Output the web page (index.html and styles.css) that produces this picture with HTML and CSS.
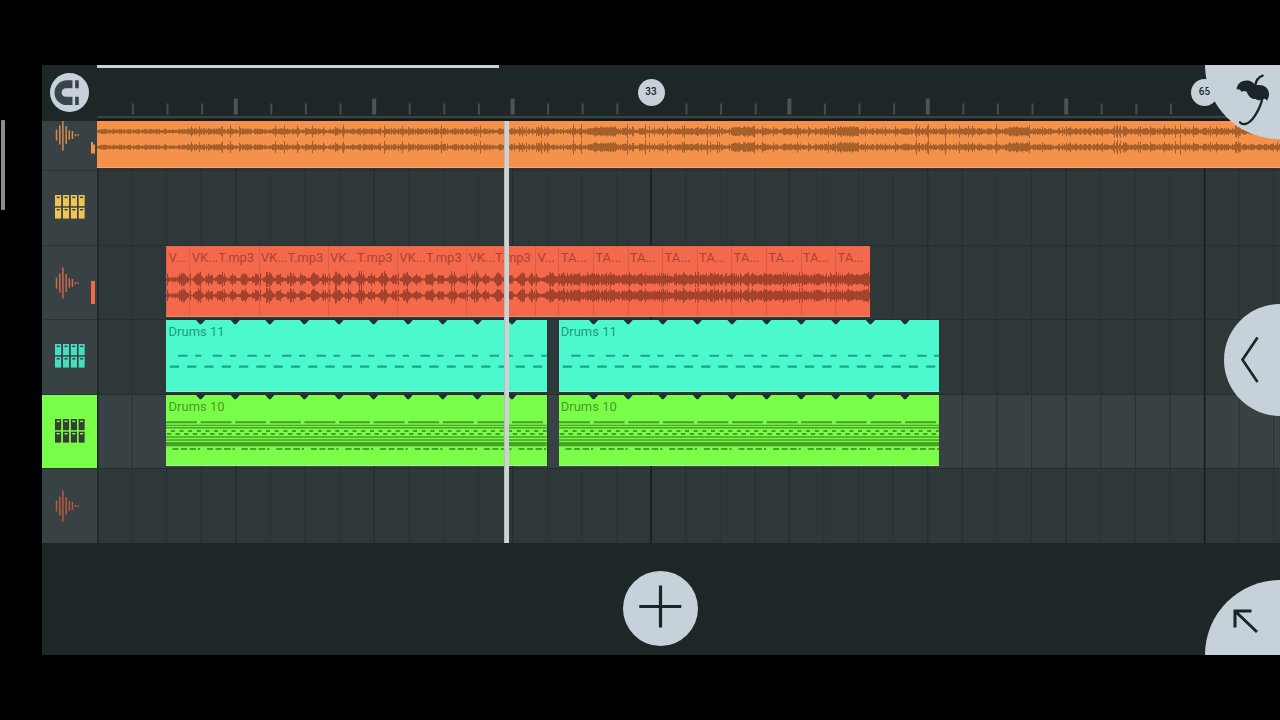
FILE: index.html
```html
<!DOCTYPE html>
<html>

<head>
    <meta charset="utf-8">
    <title>Playlist</title>
    <link rel="stylesheet" href="styles.css">
</head>

<body>
    <svg class="defs">
        <symbol id="icon-wave" viewBox="0 0 24 34">
            <path d="M1.5 11.5v11M4.8 7.5v19M7.9 1.5v31M11.2 8v18M14.3 12.3v9.4M17.4 13v8M20.5 16v2.2M23.2 16.2v1.6" stroke="currentColor" stroke-width="1.5" fill="none"/>
        </symbol>
        <symbol id="pad" viewBox="0 0 6.4 11.4">
            <rect width="6.4" height="11.4" fill="currentColor"/>
            <rect class="pad-hole" x="1.7" y="1.6" width="3" height="1.5"/>
        </symbol>
        <symbol id="icon-pads" viewBox="0 0 30 24">
            <use href="#pad" x="0" y="0" width="6.4" height="11.4"/>
            <use href="#pad" x="7.8" y="0" width="6.4" height="11.4"/>
            <use href="#pad" x="15.6" y="0" width="6.4" height="11.4"/>
            <use href="#pad" x="23.4" y="0" width="6.4" height="11.4"/>
            <use href="#pad" x="0" y="12.4" width="6.4" height="11.4"/>
            <use href="#pad" x="7.8" y="12.4" width="6.4" height="11.4"/>
            <use href="#pad" x="15.6" y="12.4" width="6.4" height="11.4"/>
            <use href="#pad" x="23.4" y="12.4" width="6.4" height="11.4"/>
        </symbol>
    </svg>
    <div class="edge-handle"></div>

    <div class="app">
        <div class="header">
            <div class="corner">
                <div class="magnet">
                    <svg viewBox="149 53 118 118" width="39" height="39">
                        <path d="M217 75H200A37.5 37.5 0 0 0 200 150H217V125H197A13 13 0 0 1 197 99H217ZM225 75h11v24h-11zM225 125h11v25h-11z" fill="#3b444a"/>
                    </svg>
                </div>
            </div>
            <div class="ruler">
                <div class="scroll"></div>
                <svg class="ticks" id="ticks" width="1183" height="48"></svg>
                <div class="ruler-line"></div>
                <div class="marker m33">33</div>
                <div class="marker m65">65</div>
            </div>
        </div>

        <div class="tracks">
            <div class="track first">
                <div class="head orange"><svg class="wave-icon"><use href="#icon-wave"/></svg><div class="meter half"></div></div>
                <div class="lane"><div class="clip orange"><svg class="notes" id="mainWave" width="1183" height="47"></svg></div></div>
            </div>
            <div class="track">
                <div class="head yellow"><svg class="pads-icon"><use href="#icon-pads"/></svg></div>
                <div class="lane"></div>
            </div>
            <div class="track">
                <div class="head red"><svg class="wave-icon"><use href="#icon-wave"/></svg><div class="meter"></div></div>
                <div class="lane offset">
                    <div class="clip red" data-wave="beat" data-bars="0.6667">V...</div>
                    <div class="clip red" data-wave="beat" data-bars="2">VK...T.mp3</div>
                    <div class="clip red" data-wave="beat" data-bars="2">VK...T.mp3</div>
                    <div class="clip red" data-wave="beat" data-bars="2">VK...T.mp3</div>
                    <div class="clip red" data-wave="beat" data-bars="2">VK...T.mp3</div>
                    <div class="clip red" data-wave="beat" data-bars="2">VK...T.mp3</div>
                    <div class="clip red" data-wave="beat" data-bars="0.6667">V...</div>
                    <div class="clip red" data-wave="dense" data-bars="1">TA...</div>
                    <div class="clip red" data-wave="dense" data-bars="1">TA...</div>
                    <div class="clip red" data-wave="dense" data-bars="1">TA...</div>
                    <div class="clip red" data-wave="dense" data-bars="1">TA...</div>
                    <div class="clip red" data-wave="dense" data-bars="1">TA...</div>
                    <div class="clip red" data-wave="dense" data-bars="1">TA...</div>
                    <div class="clip red" data-wave="dense" data-bars="1">TA...</div>
                    <div class="clip red" data-wave="dense" data-bars="1">TA...</div>
                    <div class="clip red" data-wave="dense" data-bars="1">TA...</div>
                </div>
            </div>
            <div class="track">
                <div class="head teal"><svg class="pads-icon"><use href="#icon-pads"/></svg></div>
                <div class="lane offset gapped">
                    <div class="clip teal" data-notes="drums11">Drums 11</div>
                    <div class="clip teal" data-notes="drums11">Drums 11</div>
                </div>
            </div>
            <div class="track selected">
                <div class="head green"><svg class="pads-icon"><use href="#icon-pads"/></svg></div>
                <div class="lane offset gapped">
                    <div class="clip green" data-notes="drums10">Drums 10</div>
                    <div class="clip green" data-notes="drums10">Drums 10</div>
                </div>
            </div>
            <div class="track">
                <div class="head rust"><svg class="wave-icon"><use href="#icon-wave"/></svg></div>
                <div class="lane"></div>
            </div>
            <div class="playhead"></div>
        </div>

        <div class="footer">
            <div class="round add">
                <svg width="75" height="75"><path d="M16.3 35.5h42M37.5 14.5v42" stroke="#1b2527" stroke-width="3.2"/></svg>
            </div>
        </div>

        <div class="round menu">
            <svg viewBox="315 15 225 225" width="75" height="75">
                <path d="M410 89C410 68 432 58 450 63C458 66 463 71 467 76C485 71 507 80 507 102C507 109 505 116 501 122C497 116 492 115 487 118C481 122 472 121 466 116C456 119 446 111 441 97C436 92 430 92 425 96C421 88 415 86 410 89Z" fill="#1b2527"/>
                <path d="M465 80C467 63 476 51 488 47M488 112C480 150 455 189 435 192C427 193 423 191 420 187" fill="none" stroke="#1b2527" stroke-width="7" stroke-linecap="round"/>
            </svg>
        </div>
        <div class="round panel">
            <svg width="56" height="112"><path d="M33.5 33.5L18.5 55.7L33.5 78" fill="none" stroke="#1b2527" stroke-width="2.6"/></svg>
        </div>
        <div class="round expand">
            <svg width="75" height="75"><path d="M46.5 31H30V47.5M30.5 31.5L52 52" fill="none" stroke="#1b2527" stroke-width="3"/></svg>
        </div>
    </div>

    <script src="playlist.js"></script>
</body>

</html>
```
FILE: styles.css
```css
body {
    margin: 0;
    padding: 65px 0 0 42px;
    background: #000;
    font: 400 13px/16px Roboto, sans-serif;
    overflow: hidden;
}

svg {
    display: block;
}

.defs {
    position: absolute;
    width: 0;
    height: 0;
}

.edge-handle {
    position: absolute;
    left: 1px;
    top: 120px;
    width: 4px;
    height: 90px;
    border-radius: 1px;
    background: #8e8e86;
}

.app {
    position: relative;
    width: 1238px;
    height: 590px;
    background: #1e2728;
    overflow: hidden;
    display: flex;
    flex-direction: column;
}

.header {
    display: flex;
    height: 56px;
}

.corner {
    width: 55px;
    box-sizing: border-box;
    padding: 8px 0 0 8px;
}

.magnet {
    width: 39px;
    height: 39px;
    border-radius: 50%;
    background: #c6d1d9;
}

.ruler {
    position: relative;
    flex: 1;
    box-sizing: border-box;
    border-bottom: 2px solid #161c1d;
}

.scroll {
    width: 402px;
    height: 2.5px;
    background: #c6d1d9;
}

.ruler-line {
    height: 2px;
    margin-top: .5px;
    background: #3b4445;
}

.marker {
    position: absolute;
    top: 14px;
    width: 27px;
    height: 27px;
    border-radius: 50%;
    background: #c6d1d9;
    color: #1b2527;
    font: 500 10px/26px Roboto, sans-serif;
    text-align: center;
}

.m33 {
    left: 540.5px;
}

.m65 {
    left: 1094px;
}

.tracks {
    position: relative;
}

.track {
    display: flex;
    height: 74.5px;
}

.track.first {
    height: 49.3px;
}

.head {
    position: relative;
    display: flex;
    align-items: center;
    width: 55px;
    box-sizing: border-box;
    padding-left: 13px;
    background: #384143;
    border-top: 1px solid #2a3233;
    --hole: #384143;
}

.head.orange { color: #d68b4e; }
.head.yellow { color: #efc453; }
.head.red { color: #cf6650; }
.head.teal { color: #45dfc0; }
.head.rust { color: #b9593f; }

.head.green {
    color: #34402f;
    background: #79fd49;
    --hole: #8cf069;
}

.track.first .head {
    align-items: flex-start;
    border-top: 0;
    overflow: hidden;
}

.pad-hole {
    fill: var(--hole);
}

.wave-icon {
    width: 24px;
    height: 34px;
}

.track.first .wave-icon {
    margin-top: -3px;
}

.pads-icon {
    width: 30px;
    height: 24px;
    margin-bottom: 2px;
}

.meter {
    position: absolute;
    right: 2px;
    top: 35px;
    width: 4px;
    height: 23px;
    background: #f0694b;
}

.meter.half {
    top: 20.5px;
    height: 12px;
    background: #f29049;
    clip-path: polygon(0 0, 50% 0, 50% 25%, 100% 25%, 100% 100%, 0 100%);
}

/* one bar is 34.6px, the strong lines come every 4 and every 16 bars */
.lane {
    flex: 1;
    display: flex;
    box-sizing: border-box;
    border-top: 1px solid #252e2f;
    background-color: #2f3838;
    background-image:
        linear-gradient(90deg, #1a2223 2px, transparent 2px),
        linear-gradient(90deg, #222b2b 1.4px, transparent 1.4px),
        linear-gradient(90deg, #283131 1px, transparent 1px);
    background-size: 553.6px 100%, 138.4px 100%, 34.6px 100%;
    background-position: -.5px 0, 0 0, 0 0;
}

.selected .lane {
    background-color: #384143;
}

.offset {
    padding-left: 69.4px;
}

.gapped {
    gap: 11.6px;
}

.clip {
    position: relative;
    height: 71px;
    flex: none;
    box-sizing: border-box;
    padding: 4px 0 0 2.2px;
    border-bottom: 1px solid;
    white-space: nowrap;
}

.notes {
    position: absolute;
    left: 0;
    top: 0;
}

.clip.orange {
    width: 1183px;
    height: 47px;
    margin-top: -1px;
    background: #f4914a;
    border-color: #f4a76e;
}

.clip.red {
    background: #f4694b;
    border-color: #e08d7c;
    color: #ab4531;
    box-shadow: inset 1px 0 #dd5e44;
}

.clip.teal {
    height: 72px;
    width: 380.6px;
    background: #4cf9cd;
    border-color: #9be8d4;
    color: #209c82;
}

.clip.green {
    width: 380.6px;
    background: #79fd49;
    border-color: #b0f594;
    color: #469e26;
}

.playhead {
    position: absolute;
    left: 462px;
    top: 0;
    width: 5px;
    height: 422px;
    background: #cdd3d5;
    border-left: 1px solid #b4bcbe;
    box-sizing: border-box;
}

.footer {
    flex: 1;
    display: flex;
    justify-content: center;
    align-items: flex-start;
    padding: 28px 1px 0 0;
}

.round {
    background: #c6d1d9;
}

.add {
    width: 75px;
    height: 75px;
    border-radius: 50%;
}

.menu,
.panel,
.expand {
    position: absolute;
    right: 0;
    width: 75px;
    height: 75px;
}

.menu {
    top: 0;
    height: 74px;
    overflow: hidden;
    border-radius: 0 0 0 75px;
}

.panel {
    top: 239px;
    width: 56px;
    height: 112px;
    border-radius: 56px 0 0 56px;
}

.expand {
    bottom: 0;
    border-radius: 75px 0 0 0;
}
```
FILE: playlist.js
```js
const BAR = 34.6;
const NS = 'http://www.w3.org/2000/svg';

let seed = 7;
function rnd() {
    seed = (seed * 16807) % 2147483647;
    return seed / 2147483647;
}

function addPath(svg, d, color) {
    const p = document.createElementNS(NS, 'path');
    p.setAttribute('d', d);
    p.setAttribute('fill', color);
    svg.appendChild(p);
}

function box(x, y, w, h) {
    return `M${x.toFixed(1)} ${y.toFixed(1)}h${w.toFixed(1)}v${h.toFixed(1)}h${(-w).toFixed(1)}z`;
}

function newSvg(clip, w, h) {
    const svg = document.createElementNS(NS, 'svg');
    svg.setAttribute('class', 'notes');
    svg.setAttribute('width', w);
    svg.setAttribute('height', h);
    clip.appendChild(svg);
    return svg;
}

// ruler
let minor = '', major = '';
for (let i = 1; i < 35; i++) {
    if (i % 16 === 0) continue;
    const x = i * BAR;
    if (i % 4 === 0) major += box(x - 1.6, 30.5, 4, 16);
    else minor += box(x + .3, 35.5, 2, 11);
}
addPath(document.getElementById('ticks'), minor, '#444d4e');
addPath(document.getElementById('ticks'), major, '#4c5556');

// long audio clip, two channels
const solid = [[496, 519], [634, 656], [740, 762], [912, 932]];
let wave = '';
for (let x = 0; x < 1183; x++) {
    let a = 1.2 + rnd() * (x < 90 ? 1.6 : 2.2);
    if (rnd() > .88 && x > 80) a += 1 + rnd() * 2.8;
    if (x > 470) a += .3;
    if (solid.some(s => x >= s[0] && x < s[1])) a = 3.4 + rnd() * 1.8;
    wave += box(x, 10.5 - a, 1, a * 2);
    const b = a * (.85 + rnd() * .25);
    wave += box(x, 26.2 - b, 1, b * 2);
}
addPath(document.getElementById('mainWave'), wave, '#a6602b');

// short audio clips
document.querySelectorAll('[data-wave]').forEach(clip => {
    const w = clip.dataset.bars * BAR;
    clip.style.width = w + 'px';
    const svg = newSvg(clip, w, 71);
    let d = '';
    for (let x = 0; x < w; x++) {
        let a;
        if (clip.dataset.wave === 'beat') {
            if (w < 30) {
                a = 1 + rnd() * 2 + (3 + rnd() * 3) * Math.exp(-Math.pow((x - 16) / 4, 2));
            } else {
                const p = x % 23.07;
                a = .8 + rnd() * 1.2
                    + (2 + rnd() * 5) * Math.exp(-Math.pow((p - 9) / 4, 4))
                    + (1 + rnd() * 4) * Math.exp(-Math.pow((p - 20) / 3.6, 4));
            }
            if (x === 1) a = 6;
        } else {
            a = 2 + rnd() * 3.2 + 1.4 * Math.abs(Math.cos(x / BAR * Math.PI * 2));
            if (x % 4 === 1) a += 1.4;
        }
        const b = a * (.85 + rnd() * .2);
        d += box(x, 33.5 - a, 1, a * 2) + box(x, 49.5 - b, 1, b * 2);
    }
    addPath(svg, d, '#a4432d');
});

// drum patterns, [start, length] inside a step of `len` px
function row(d, y, h, len, notes, w) {
    for (let x = 0; x < w; x += len) {
        notes.forEach(n => {
            const s = x + n[0];
            if (s < w) d.push(box(s, y, Math.min(n[1], w - s), h));
        });
    }
}

document.querySelectorAll('[data-notes]').forEach(clip => {
    const w = BAR * 11;
    const svg = newSvg(clip, w, 71);
    const d = [];
    if (clip.dataset.notes === 'drums11') {
        row(d, 34.7, 2.1, BAR, [[12.2, 9.4], [29.2, 6.2]], w);
        row(d, 45.6, 2.1, BAR / 2, [[3.8, 9.2]], w);
        addPath(svg, d.join(''), '#1fa286');
    } else {
        row(d, 26.2, 2, BAR, [[0, 31]], w);
        row(d, 29.8, 1.3, w, [[0, w]], w);
        row(d, 32, 1.6, w, [[0, w]], w);
        row(d, 35, 2, BAR / 4, [[4.9, 4]], w);
        row(d, 38, 2, BAR / 4, [[.8, 4.5]], w);
        row(d, 41.2, 1.5, w, [[0, w]], w);
        row(d, 44.2, 1.5, w, [[0, w]], w);
        row(d, 47, 4.2, w, [[0, w]], w);
        row(d, 53, 2, BAR, [[6.5, 6], [15, 6], [23.5, 6.5], [32, 2.2]], w);
        addPath(svg, d.join(''), '#47a326');
    }
    let marks = '';
    for (let i = 1; i < 11; i++) {
        marks += `M${(i * BAR - 4.6).toFixed(1)} 0h9.2l-3.8 4.2h-1.6z`;
    }
    addPath(svg, marks, '#1c3330');
});
```
